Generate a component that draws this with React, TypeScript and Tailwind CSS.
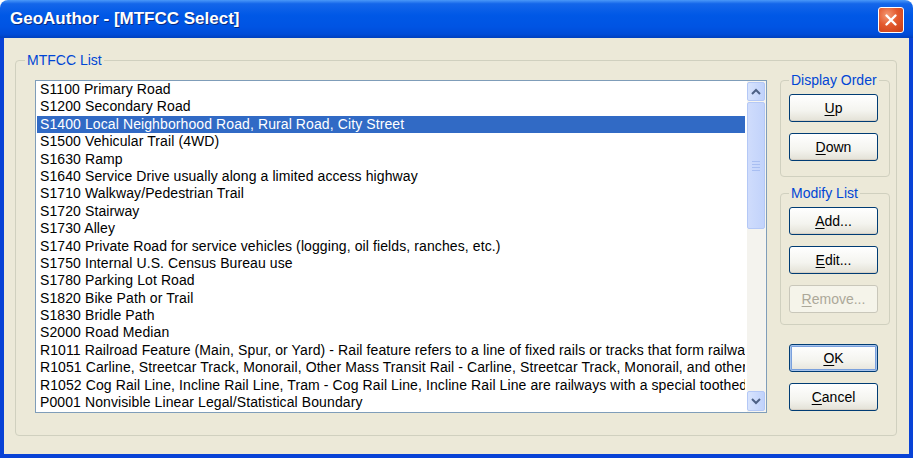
import React from "react";

const items = [
  "S1100 Primary Road",
  "S1200 Secondary Road",
  "S1400 Local Neighborhood Road, Rural Road, City Street",
  "S1500 Vehicular Trail (4WD)",
  "S1630 Ramp",
  "S1640 Service Drive usually along a limited access highway",
  "S1710 Walkway/Pedestrian Trail",
  "S1720 Stairway",
  "S1730 Alley",
  "S1740 Private Road for service vehicles (logging, oil fields, ranches, etc.)",
  "S1750 Internal U.S. Census Bureau use",
  "S1780 Parking Lot Road",
  "S1820 Bike Path or Trail",
  "S1830 Bridle Path",
  "S2000 Road Median",
  "R1011 Railroad Feature (Main, Spur, or Yard) - Rail feature refers to a line of fixed rails or tracks that form railways, including mainlines, spurs, and yards",
  "R1051 Carline, Streetcar Track, Monorail, Other Mass Transit Rail - Carline, Streetcar Track, Monorail, and other mass transit rail lines",
  "R1052 Cog Rail Line, Incline Rail Line, Tram - Cog Rail Line, Incline Rail Line are railways with a special toothed center track",
  "P0001 Nonvisible Linear Legal/Statistical Boundary",
];

function XpButton({
  mn,
  rest,
  disabled = false,
  isDefault = false,
}: {
  mn: string;
  rest: string;
  disabled?: boolean;
  isDefault?: boolean;
}) {
  return (
    <button
      className={
        "w-[89px] h-[28px] shrink-0 rounded-[3px] border text-[14px] leading-none flex items-center justify-center " +
        (disabled
          ? "border-[#C9C7BA] bg-[#F5F4EA] text-[#ACA899]"
          : isDefault
          ? "border-[#003C74] bg-[linear-gradient(to_bottom,#ffffff_0%,#f4f4ef_60%,#e6e4da_100%)] text-black shadow-[inset_0_0_0_1px_#a8c4ec,inset_0_0_0_2px_#7aa0dc]"
          : "border-[#003C74] bg-[linear-gradient(to_bottom,#ffffff_0%,#f4f4ef_60%,#e3e1d6_100%)] text-black shadow-[inset_0_-1px_0_#d6d0c5]")
      }
    >
      <span className="whitespace-nowrap">
        <span className="underline underline-offset-2">{mn}</span>
        {rest}
      </span>
    </button>
  );
}

function Chevron({ up }: { up: boolean }) {
  return (
    <svg width="10" height="7" viewBox="0 0 10 7">
      <path
        d={up ? "M1 6 L5 2 L9 6" : "M1 1 L5 5 L9 1"}
        fill="none"
        stroke="#4D6185"
        strokeWidth="2"
      />
    </svg>
  );
}

export default function App() {
  return (
    <div
      className="w-[913px] h-[458px] flex flex-col bg-white overflow-hidden"
      style={{ fontFamily: '"Liberation Sans", Arial, sans-serif' }}
    >
      {/* Title bar */}
      <div className="h-[38px] shrink-0 rounded-t-[8px] bg-[linear-gradient(to_bottom,#4a98f8_0%,#1466ea_10%,#0058e6_40%,#0054e3_70%,#004cd8_90%,#0040bd_100%)] flex items-center pl-[10px] pr-[9px]">
        <div className="flex-1 text-white font-bold text-[17px] [text-shadow:1px_1px_0_#0a2a80]">
          GeoAuthor - [MTFCC Select]
        </div>
        <div className="w-[26px] h-[26px] mt-[1px] rounded-[3px] border border-white bg-[radial-gradient(circle_at_35%_30%,#f49a74_0%,#e3592e_45%,#c63d16_100%)] flex items-center justify-center">
          <svg width="14" height="14" viewBox="0 0 14 14">
            <path
              d="M2.5 2.5 L11.5 11.5 M11.5 2.5 L2.5 11.5"
              stroke="white"
              strokeWidth="2.4"
              strokeLinecap="round"
            />
          </svg>
        </div>
      </div>

      {/* Body */}
      <div className="flex-1 bg-[#ECE9D8] border-x-4 border-b-4 border-[#0842D6] pt-[14px] pl-[11px] pr-[12px]">
        <fieldset className="h-[384px] border border-[#D0D0BF] rounded-[4px] px-0 pb-0">
          <legend className="ml-[9px] px-[2px] text-[14px] leading-[16px] text-[#0046D5]">
            MTFCC List
          </legend>
          <div className="flex items-start">
            {/* Listbox */}
            <div className="ml-[19px] mt-[12px] w-[732px] h-[333px] border border-[#7F9DB9] bg-white flex">
              <div className="flex-1 min-w-0 pl-[1px] pr-[2px] overflow-hidden">
                {items.map((t, i) => (
                  <div
                    key={i}
                    className={
                      "h-[17.4px] leading-[17.4px] pl-[3px] whitespace-nowrap overflow-hidden text-[14px] tracking-[0.1px] " +
                      (i === 2 ? "bg-[#316AC5] text-white" : "text-black")
                    }
                  >
                    {t}
                  </div>
                ))}
              </div>
              {/* Scrollbar */}
              <div className="w-[19px] bg-[#F6F5F0] flex flex-col py-[1px] pr-[1px]">
                <div className="h-[19px] rounded-[2px] border border-[#B4C8F6] bg-[linear-gradient(to_right,#d8e4fd,#c0d2fb)] flex items-center justify-center">
                  <Chevron up />
                </div>
                <div className="h-[127px] mt-[1px] rounded-[2px] border border-[#B4C8F6] bg-[linear-gradient(to_right,#cfdcfc,#c2d3fb)] flex items-center justify-center">
                  <div className="flex flex-col gap-[2px]">
                    <div className="w-[8px] h-[1px] bg-[#A8BEF2]" />
                    <div className="w-[8px] h-[1px] bg-[#A8BEF2]" />
                    <div className="w-[8px] h-[1px] bg-[#A8BEF2]" />
                    <div className="w-[8px] h-[1px] bg-[#A8BEF2]" />
                  </div>
                </div>
                <div className="flex-1 bg-[#F4F3EE]" />
                <div className="h-[20px] rounded-[2px] border border-[#B4C8F6] bg-[linear-gradient(to_right,#d8e4fd,#c0d2fb)] flex items-center justify-center">
                  <Chevron up={false} />
                </div>
              </div>
            </div>

            {/* Right column */}
            <div className="ml-[13px] mt-[4px] w-[110px] flex flex-col">
              <fieldset className="h-[105px] border border-[#D0D0BF] rounded-[4px] px-[8px] pt-[6px] flex flex-col gap-[11px]">
                <legend className="-mr-[20px] px-[2px] text-[14px] leading-[16px] whitespace-nowrap text-[#0046D5]">
                  Display Order
                </legend>
                <XpButton mn="U" rest="p" />
                <XpButton mn="D" rest="own" />
              </fieldset>
              <fieldset className="mt-[8px] h-[140px] border border-[#D0D0BF] rounded-[4px] px-[8px] pt-[6px] flex flex-col gap-[11px]">
                <legend className="-mr-[20px] px-[2px] text-[14px] leading-[16px] whitespace-nowrap text-[#0046D5]">
                  Modify List
                </legend>
                <XpButton mn="A" rest="dd..." />
                <XpButton mn="E" rest="dit..." />
                <XpButton mn="R" rest="emove..." disabled />
              </fieldset>
              <div className="mt-[19px] pl-[9px] flex flex-col gap-[11px]">
                <XpButton mn="O" rest="K" isDefault />
                <XpButton mn="C" rest="ancel" />
              </div>
            </div>
          </div>
        </fieldset>
      </div>
    </div>
  );
}
